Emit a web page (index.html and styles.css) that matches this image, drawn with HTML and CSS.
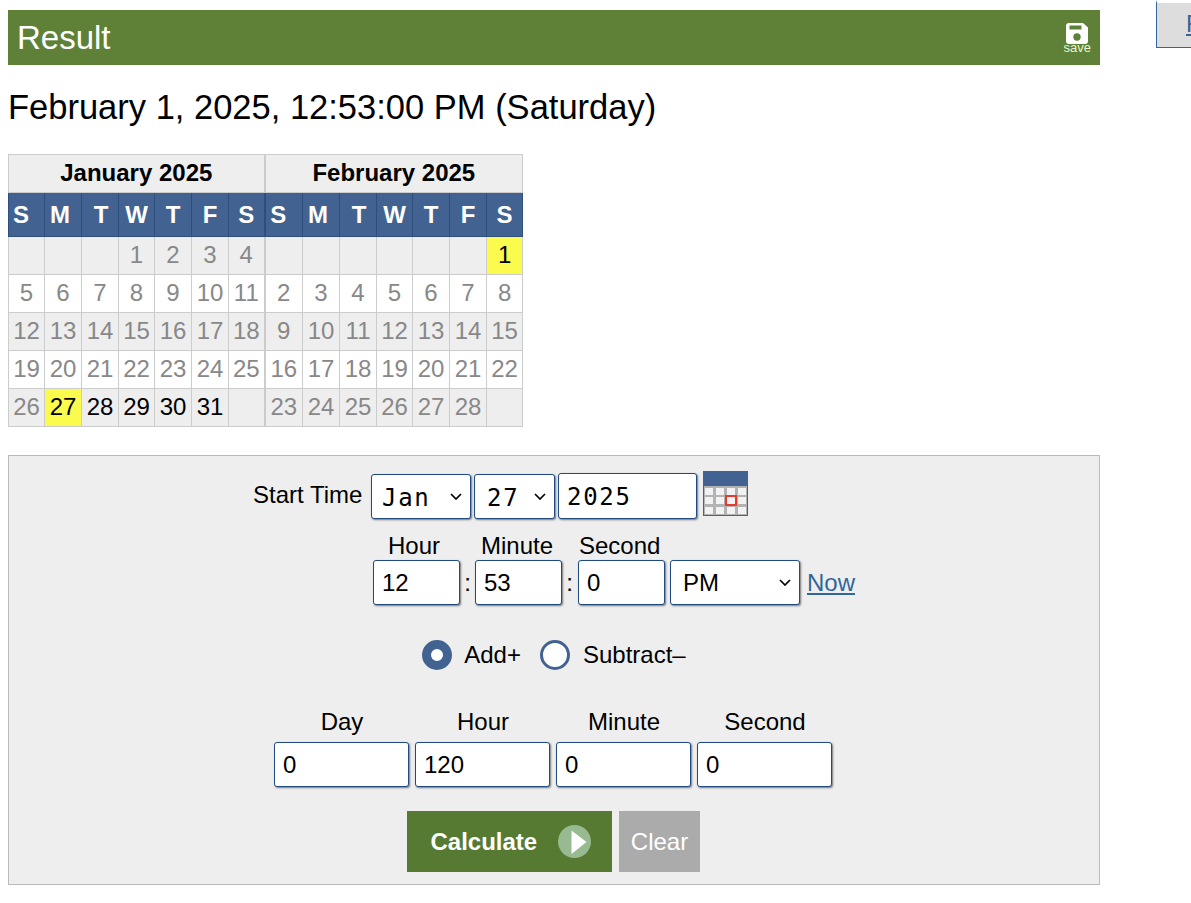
FILE: index.html
```html
<!DOCTYPE html>
<html lang="en">
<head>
    <meta charset="UTF-8">
    <title>Time Calculator</title>
    <link rel="stylesheet" href="styles.css">
</head>
<body>

<div class="page">
    <div class="content">
        <div class="result-bar">
            <h2>Result</h2>
            <a class="save" href="#">
                <svg width="22" height="21" viewBox="0 0 22 21">
                    <path fill="#fff" d="M3 0H17L22 4.5V18A3 3 0 0 1 19 21H3A3 3 0 0 1 0 18V3A3 3 0 0 1 3 0Z"/>
                    <rect x="3.5" y="2.5" width="12" height="4" fill="#5f8137"/>
                    <circle cx="11" cy="14" r="3.7" fill="#5f8137"/>
                </svg>
                <span>save</span>
            </a>
        </div>

        <p class="answer">February 1, 2025, 12:53:00 PM (Saturday)</p>

        <table class="calendar">
            <colgroup>
                <col class="w36"><col class="w37"><col class="w37"><col class="w36"><col class="w37"><col class="w37"><col class="w36">
                <col class="w38"><col class="w37"><col class="w37"><col class="w36"><col class="w37"><col class="w37"><col class="w36">
            </colgroup>
            <tr class="months">
                <th colspan="7">January 2025</th>
                <th colspan="7" class="split">February 2025</th>
            </tr>
            <tr class="weekdays">
                <th>S</th><th>M</th><th>T</th><th>W</th><th>T</th><th>F</th><th>S</th>
                <th class="split">S</th><th>M</th><th>T</th><th>W</th><th>T</th><th>F</th><th>S</th>
            </tr>
            <tr class="shade">
                <td></td><td></td><td></td><td>1</td><td>2</td><td>3</td><td>4</td>
                <td class="split"></td><td></td><td></td><td></td><td></td><td></td><td class="mark">1</td>
            </tr>
            <tr>
                <td>5</td><td>6</td><td>7</td><td>8</td><td>9</td><td>10</td><td>11</td>
                <td class="split">2</td><td>3</td><td>4</td><td>5</td><td>6</td><td>7</td><td>8</td>
            </tr>
            <tr class="shade">
                <td>12</td><td>13</td><td>14</td><td>15</td><td>16</td><td>17</td><td>18</td>
                <td class="split">9</td><td>10</td><td>11</td><td>12</td><td>13</td><td>14</td><td>15</td>
            </tr>
            <tr>
                <td>19</td><td>20</td><td>21</td><td>22</td><td>23</td><td>24</td><td>25</td>
                <td class="split">16</td><td>17</td><td>18</td><td>19</td><td>20</td><td>21</td><td>22</td>
            </tr>
            <tr class="shade">
                <td>26</td><td class="mark">27</td><td class="on">28</td><td class="on">29</td><td class="on">30</td><td class="on">31</td><td></td>
                <td class="split">23</td><td>24</td><td>25</td><td>26</td><td>27</td><td>28</td><td></td>
            </tr>
        </table>

        <form class="panel">
            <div class="start-grid">
                <label class="start-label">Start Time</label>
                <div class="date-row">
                    <select class="mono sel-month"><option>Jan</option></select>
                    <select class="mono sel-day"><option>27</option></select>
                    <input class="mono inp-year" type="text" value="2025">
                    <svg class="cal-icon" width="45" height="45" viewBox="0 0 45 45">
                        <rect width="45" height="45" fill="#426391"/>
                        <rect x="1" y="15" width="43" height="29" fill="#b3b3b3"/>
                        <g fill="#f2f2f2">
                            <rect x="2" y="17" width="8" height="7"/><rect x="13" y="17" width="8" height="7"/><rect x="24" y="17" width="8" height="7"/><rect x="35" y="17" width="8" height="7"/>
                            <rect x="2" y="26" width="8" height="7"/><rect x="13" y="26" width="8" height="7"/><rect x="35" y="26" width="8" height="7"/>
                            <rect x="2" y="36" width="8" height="7"/><rect x="13" y="36" width="8" height="7"/><rect x="24" y="36" width="8" height="7"/><rect x="35" y="36" width="8" height="7"/>
                        </g>
                        <rect x="23" y="25" width="10" height="9" fill="#f2f2f2" stroke="#e8392d" stroke-width="2"/>
                    </svg>
                </div>
                <div class="time-block">
                    <div class="caps">
                        <span class="cap-hour">Hour</span>
                        <span class="cap-minute">Minute</span>
                        <span class="cap-second">Second</span>
                    </div>
                    <div class="time-row">
                        <input class="inp-time" type="text" value="12">
                        <span class="colon">:</span>
                        <input class="inp-time" type="text" value="53">
                        <span class="colon">:</span>
                        <input class="inp-time inp-sec" type="text" value="0">
                        <select class="sel-ampm"><option>PM</option></select>
                        <a class="now" href="#">Now</a>
                    </div>
                </div>
            </div>

            <div class="op-row">
                <span class="radio checked"></span><span class="op-text">Add+</span>
                <span class="radio"></span><span>Subtract&ndash;</span>
            </div>

            <div class="span-row">
                <div class="span-col"><label>Day</label><input type="text" value="0"></div>
                <div class="span-col"><label>Hour</label><input type="text" value="120"></div>
                <div class="span-col"><label>Minute</label><input type="text" value="0"></div>
                <div class="span-col"><label>Second</label><input type="text" value="0"></div>
            </div>

            <div class="btn-row">
                <button class="calc" type="button">
                    Calculate
                    <svg width="33" height="33" viewBox="0 0 33 33">
                        <circle cx="16.5" cy="16.5" r="16.5" fill="#97ba91"/>
                        <path fill="#fff" d="M13.5 5.5L28.5 17L13.5 29Z"/>
                    </svg>
                </button>
                <button class="clear" type="button">Clear</button>
            </div>
        </form>
    </div>

    <div class="side">
        <a href="#">Financial</a>
    </div>
</div>

</body>
</html>
```

FILE: styles.css
```css
html, body {
    overflow: hidden;
}
body {
    font-family: "Liberation Sans", Arial, sans-serif;
    margin: 0;
    padding: 0;
    background-color: #fff;
    color: #000;
    font-size: 24px;
}
.page {
    display: flex;
    align-items: flex-start;
    width: 1300px;
    padding-left: 8px;
}
.content {
    width: 1092px;
    flex-shrink: 0;
    padding-top: 10px;
}
.side {
    margin-left: 56px;
    width: 200px;
    height: 48px;
    flex-shrink: 0;
    box-sizing: border-box;
    background-color: #ddd;
    border: 1px solid #336699;
    border-top: 3px solid #fff;
    padding: 6px 0 0 29px;
    line-height: 30px;
    white-space: nowrap;
}
a {
    color: #336699;
}

.result-bar {
    height: 55px;
    background-color: #5f8137;
    color: #fff;
    display: flex;
    justify-content: space-between;
    padding: 0 9px;
}
.result-bar h2 {
    margin: 0;
    font-weight: normal;
    font-size: 33px;
    line-height: 55px;
}
.save {
    display: flex;
    flex-direction: column;
    align-items: center;
    padding-top: 13px;
    color: #e8f5d0;
    text-decoration: none;
    font-size: 13px;
    line-height: 12px;
}
.save svg {
    display: block;
}
.save span {
    margin-top: -2px;
}

.answer {
    margin: 0;
    font-size: 34.5px;
    line-height: 37px;
    padding-top: 24px;
    padding-bottom: 28px;
}

.calendar {
    border-collapse: collapse;
    table-layout: fixed;
    width: 515px;
    text-align: center;
}
.w36 {
    width: 36px;
}
.w37 {
    width: 37px;
}
.w38 {
    width: 38px;
}
.calendar th, .calendar td {
    padding: 0 0 2px;
    border: 1px solid #ccc;
    color: #888;
    height: 35px;
    overflow: hidden;
}
.calendar .months th {
    background-color: #eee;
    color: #000;
}
.calendar .weekdays th {
    background-color: #426391;
    color: #fff;
    border-color: #2e4f7e;
    border-top-color: #ccc;
    padding-bottom: 0;
    height: 43px;
}
/* first letters of each month sit left of centre */
.calendar .weekdays th:nth-child(7n+1) {
    padding-right: 11px;
}
.calendar .weekdays th:nth-child(7n+2) {
    padding-right: 6px;
}
.calendar .weekdays th:nth-child(7n+3) {
    padding-left: 2px;
}
.calendar .shade td {
    background-color: #eee;
}
.calendar .split {
    border-left: 2px solid #ccc;
}
.calendar .weekdays .split {
    border-left-color: #2e4f7e;
}
.calendar td.on {
    color: #000;
}
.calendar td.mark {
    background-color: #fbfb4d;
    color: #000;
}

.panel {
    box-sizing: border-box;
    margin-top: 28px;
    height: 430px;
    background-color: #eee;
    border: 1px solid #bbb;
    padding-top: 15px;
}
input, select {
    box-sizing: border-box;
    height: 45px;
    margin: 0;
    background-color: #fff;
    border: 1px solid #1f4a82;
    border-radius: 3px;
    box-shadow: 1px 1px 2px #777;
    font-family: "Liberation Sans", Arial, sans-serif;
    font-size: 24px;
    color: #000;
    padding: 0 8px;
}
select {
    appearance: none;
    background-image: url("data:image/svg+xml,%3Csvg xmlns='http://www.w3.org/2000/svg' width='12' height='7'%3E%3Cpath d='M1 1l5 5 5-5' fill='none' stroke='%23000' stroke-width='1.7'/%3E%3C/svg%3E");
    background-repeat: no-repeat;
    background-position: right 8px center;
}
.mono {
    font-family: "DejaVu Sans Mono", monospace;
    letter-spacing: 1.7px;
    padding-top: 2px;
}
.start-grid {
    display: grid;
    grid-template-columns: 119px auto;
    justify-content: center;
    padding-right: 1px;
}
.start-label {
    padding-top: 11px;
    padding-left: 1px;
    line-height: 26px;
}
.date-row {
    display: flex;
    gap: 3px;
    align-items: flex-start;
    padding-top: 3px;
}
.sel-month {
    width: 100px;
    padding-left: 10px;
}
.sel-day {
    width: 81px;
    padding-left: 12px;
}
.inp-year {
    width: 139px;
    height: 46px;
    margin-top: -1px;
}
.cal-icon {
    margin-left: 3px;
    margin-top: -3px;
}
.time-block {
    grid-column: 2;
    padding-left: 2px;
}
.caps {
    display: flex;
    height: 41px;
    line-height: 26px;
    padding-top: 14px;
    padding-left: 1px;
    box-sizing: border-box;
}
.cap-hour {
    width: 107px;
    padding-left: 14px;
    box-sizing: border-box;
}
.cap-minute {
    width: 98px;
}
.cap-second {
    width: 90px;
}
.time-row {
    display: flex;
    align-items: center;
}
.inp-time {
    width: 87px;
}
.inp-sec {
    margin-left: 1px;
}
.colon {
    width: 15px;
    text-align: center;
}
.sel-ampm {
    width: 130px;
    margin-left: 5px;
    padding-left: 12px;
}
.now {
    margin-left: 7px;
}

.op-row {
    display: flex;
    justify-content: center;
    align-items: center;
    height: 30px;
    margin-top: 35px;
}
.radio {
    box-sizing: border-box;
    width: 30px;
    height: 30px;
    border-radius: 50%;
    border: 3px solid #426391;
    background-color: #fff;
    margin-right: 13px;
}
.radio.checked {
    border: 9px solid #426391;
    margin-right: 12px;
}
.op-text {
    margin-right: 19px;
}

.span-row {
    display: flex;
    justify-content: center;
    gap: 6px;
    margin-top: 39px;
    padding-right: 2px;
}
.span-col {
    width: 135px;
    text-align: center;
}
.span-col label {
    display: block;
    line-height: 26px;
    margin-bottom: 7px;
    padding-left: 1px;
}
.span-col input {
    width: 135px;
    display: block;
}

.btn-row {
    display: flex;
    justify-content: center;
    gap: 7px;
    margin-top: 24px;
    padding-right: 2px;
}
button {
    border: none;
    height: 61px;
    font-family: "Liberation Sans", Arial, sans-serif;
    font-size: 24px;
    color: #fff;
    padding: 0;
}
.calc {
    width: 205px;
    background-color: #567a32;
    font-weight: bold;
    display: flex;
    align-items: center;
    padding-left: 24px;
    gap: 21px;
}
.clear {
    width: 81px;
    background-color: #ababab;
    padding-left: 1px;
}
```
